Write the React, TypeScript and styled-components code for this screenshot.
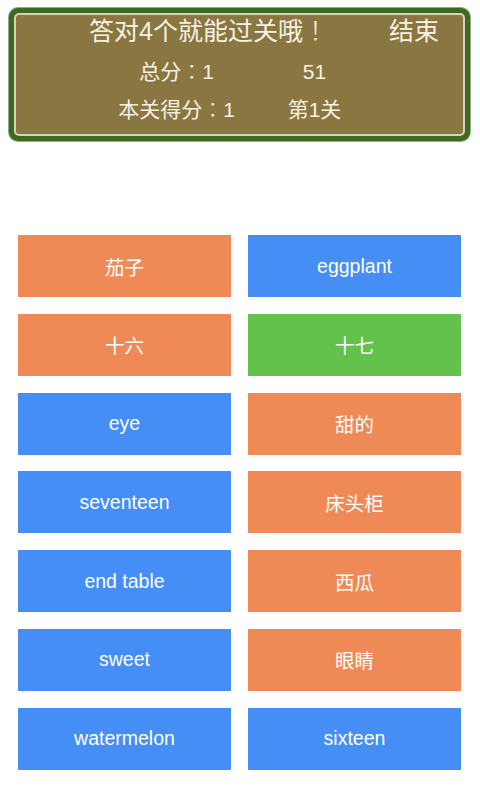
import styled, { createGlobalStyle } from "styled-components";

type Tone = "orange" | "blue" | "green";

interface Card {
	label: string;
	tone: Tone;
}

const GlobalStyle = createGlobalStyle`
	html, body {
		margin: 0;
		padding: 0;
		background: #ffffff;
	}
	body {
		font-family: "Liberation Sans", "Noto Sans CJK SC", Arial, sans-serif;
	}
`;

const Screen = styled.div`
	width: 480px;
	height: 800px;
	overflow: hidden;
	background: #ffffff;
`;

const ScoreFrame = styled.div`
	margin: 8px 10px 0 9px;
	padding: 5px;
	background: #3d6a1c;
	border-radius: 9px;
	box-shadow: 0 0 0 1px rgba(40, 80, 20, 0.5);
`;

const ScoreInner = styled.div`
	padding: 1px 0 9px;
	background: #8a7641;
	border: 2px solid #d6d2be;
	border-radius: 5px;
	color: #f6f2e4;
`;

const TitleRow = styled.div`
	display: grid;
	grid-template-columns: 1fr auto;
	align-items: center;
	height: 30px;
`;

const Title = styled.div`
	padding-left: 12px;
	text-align: center;
	font-size: 25px;
	line-height: 30px;
	white-space: nowrap;
`;

const EndButton = styled.div`
	padding-right: 24px;
	font-size: 25px;
	line-height: 30px;
	cursor: pointer;
`;

/* full-width marks sit centred in their box, as in traditional-style fonts */
const Punct = styled.span`
	font-family: "Noto Sans CJK TC", sans-serif;
	font-weight: 300;
	line-height: 1;
`;

const StatRow = styled.div<{ $gap: number }>`
	display: grid;
	grid-template-columns: 138px 138px;
	justify-content: center;
	justify-items: center;
	height: 30px;
	padding-left: 12px;
	margin-top: ${(p) => p.$gap}px;
	font-size: 21px;
	line-height: 30px;
	white-space: nowrap;
`;

const CardGrid = styled.div`
	display: grid;
	grid-template-columns: 213px 213px;
	grid-auto-rows: 62px;
	column-gap: 17px;
	row-gap: 16.8px;
	margin: 94px 0 0 18px;
`;

const toneColor: Record<Tone, string> = {
	orange: "#ef8a57",
	blue: "#448ef6",
	green: "#62c24b",
};

const WordCard = styled.div<{ $tone: Tone }>`
	display: flex;
	align-items: center;
	justify-content: center;
	background: ${(p) => toneColor[p.$tone]};
	color: #ffffff;
	font-size: 19.5px;
	cursor: pointer;
`;

const cards: Card[] = [
	{ label: "茄子", tone: "orange" },
	{ label: "eggplant", tone: "blue" },
	{ label: "十六", tone: "orange" },
	{ label: "十七", tone: "green" },
	{ label: "eye", tone: "blue" },
	{ label: "甜的", tone: "orange" },
	{ label: "seventeen", tone: "blue" },
	{ label: "床头柜", tone: "orange" },
	{ label: "end table", tone: "blue" },
	{ label: "西瓜", tone: "orange" },
	{ label: "sweet", tone: "blue" },
	{ label: "眼睛", tone: "orange" },
	{ label: "watermelon", tone: "blue" },
	{ label: "sixteen", tone: "blue" },
];

export default function App() {
	return (
		<Screen>
			<GlobalStyle />
			<ScoreFrame>
				<ScoreInner>
					<TitleRow>
						<Title>
							答对4个就能过关哦<Punct>！</Punct>
						</Title>
						<EndButton>结束</EndButton>
					</TitleRow>
					<StatRow $gap={11}>
						<span>
							总分<Punct>：</Punct>1
						</span>
						<span>51</span>
					</StatRow>
					<StatRow $gap={8}>
						<span>
							本关得分<Punct>：</Punct>1
						</span>
						<span>第1关</span>
					</StatRow>
				</ScoreInner>
			</ScoreFrame>
			<CardGrid>
				{cards.map((card) => (
					<WordCard key={card.label} $tone={card.tone}>
						{card.label}
					</WordCard>
				))}
			</CardGrid>
		</Screen>
	);
}
